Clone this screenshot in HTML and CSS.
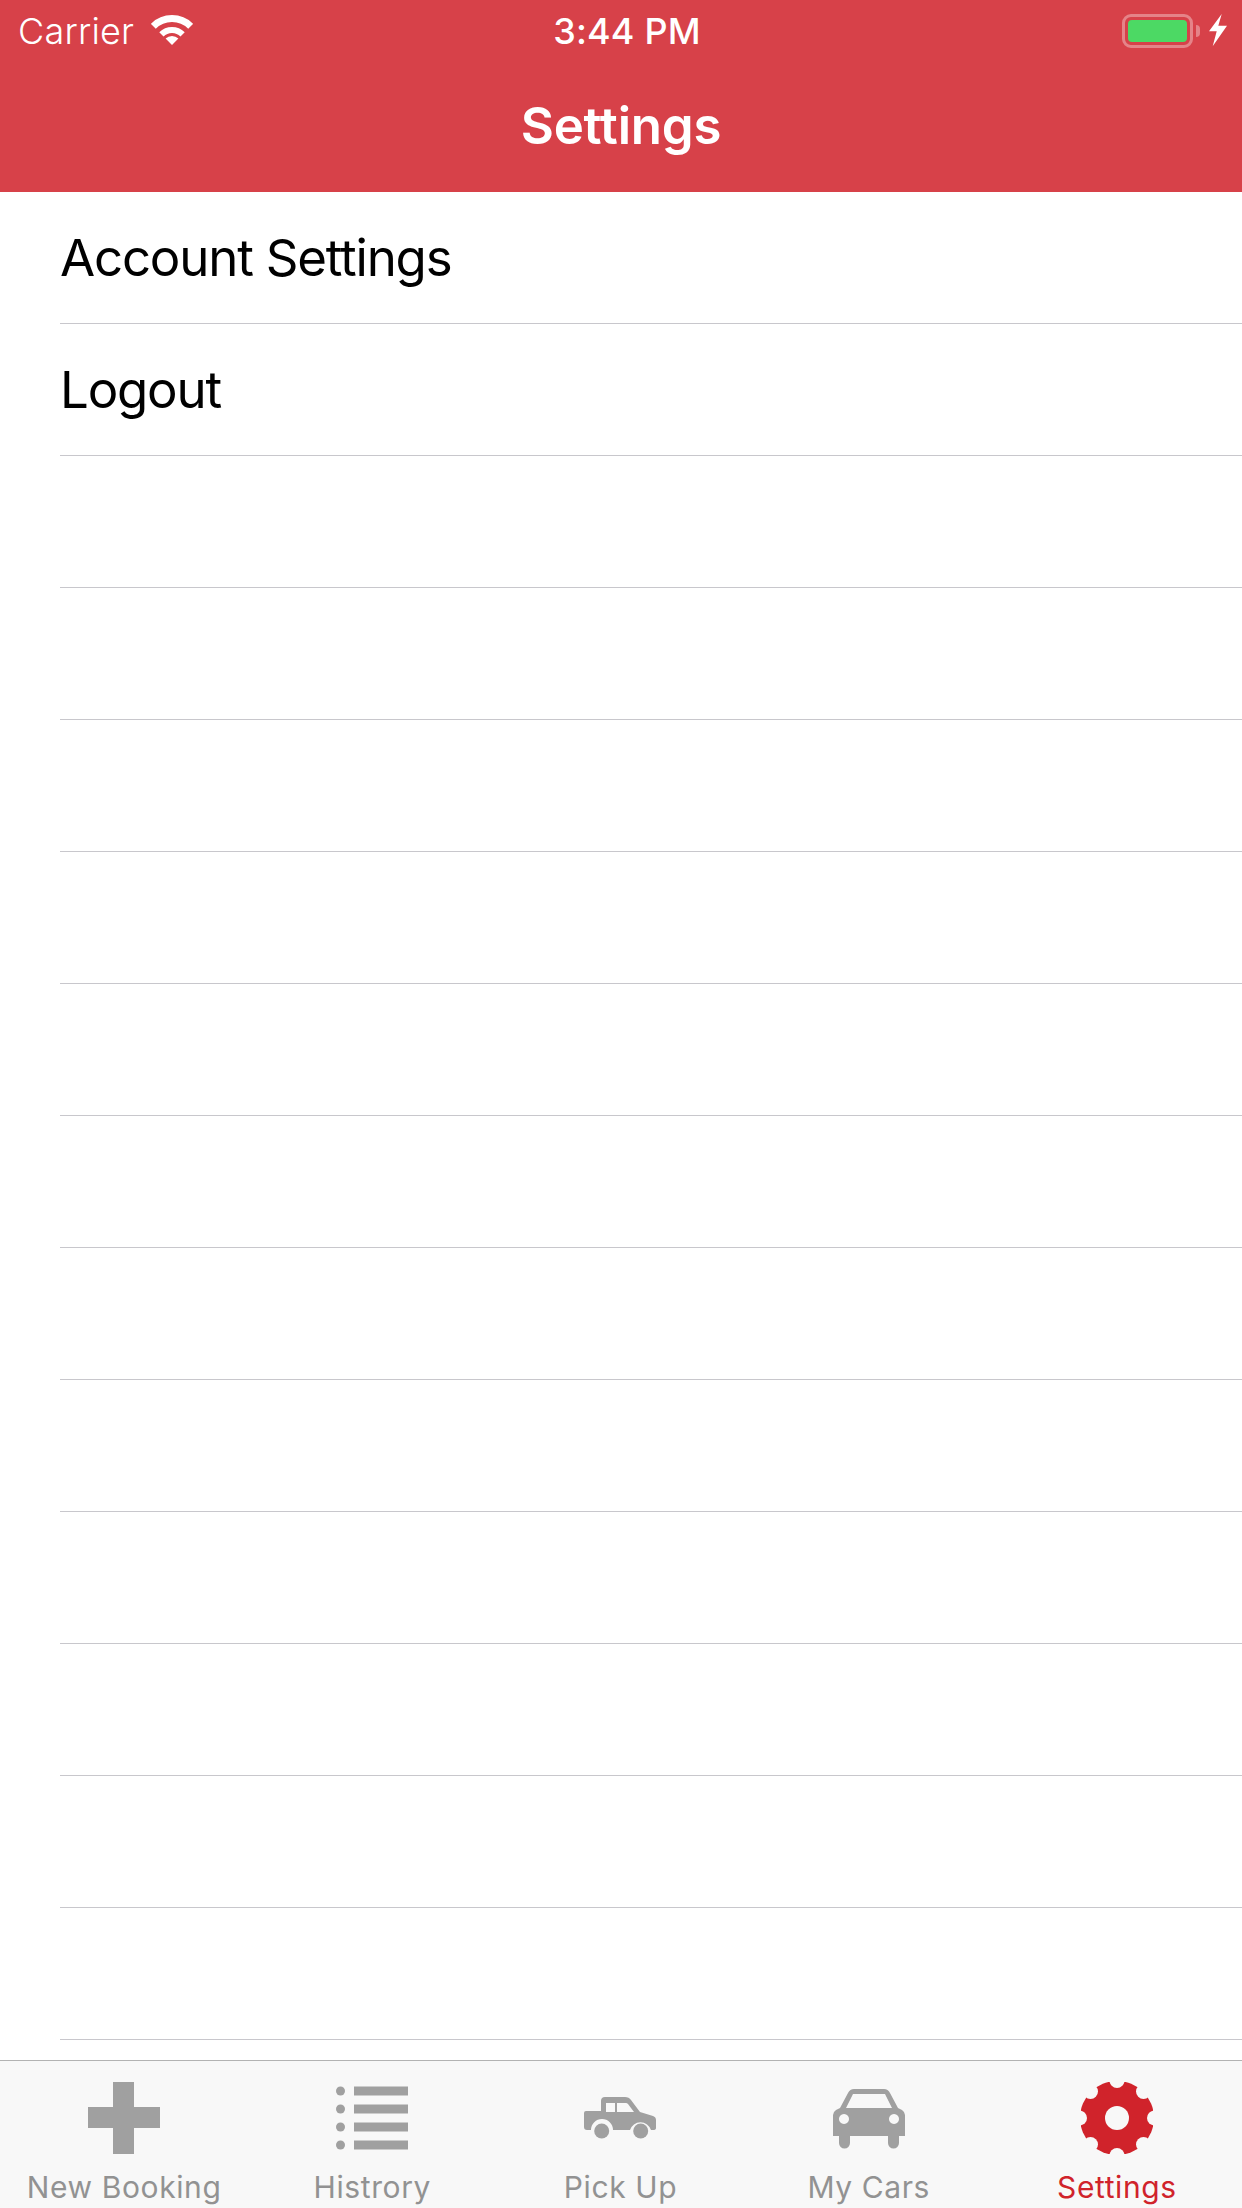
FILE: index.html
```html
<!DOCTYPE html>
<html lang="en">
<head>
  <meta charset="UTF-8">
  <meta name="viewport" content="width=device-width, initial-scale=1.0">
  <title>Settings</title>
  <link rel="stylesheet" href="styles.css">
</head>
<body>
  <div class="app">
    <header class="header">
      <div class="status">
        <div class="status-left">
          <span class="carrier">Carrier</span>
          <svg class="wifi" viewBox="0 0 42 30" fill="none" stroke="#fff">
            <path d="M2.3 11.3a26.5 26.5 0 0 1 37.4 0" stroke-width="7"/>
            <path d="M10.4 19.4a15 15 0 0 1 21.2 0" stroke-width="6"/>
            <path d="M14.6 23.6a9 9 0 0 1 12.8 0L21 30z" fill="#fff" stroke="none"/>
          </svg>
        </div>
        <span class="time">3:44 PM</span>
        <div class="status-right">
          <div class="battery"><div class="battery-level"></div></div>
          <div class="battery-nub"></div>
          <svg class="bolt" viewBox="0 0 18 33"><path d="M12.7 0 0 17.3h7.7L3.7 32.3 18 11.7H9.3z" fill="#fff"/></svg>
        </div>
      </div>
      <h1 class="title">Settings</h1>
    </header>

    <ul class="list">
      <li class="row">Account Settings</li>
      <li class="row">Logout</li>
      <li class="row"></li>
      <li class="row"></li>
      <li class="row"></li>
      <li class="row"></li>
      <li class="row"></li>
      <li class="row"></li>
      <li class="row"></li>
      <li class="row"></li>
      <li class="row"></li>
      <li class="row"></li>
      <li class="row"></li>
      <li class="row"></li>
    </ul>

    <nav class="tabs">
      <div class="tab">
        <svg class="tab-icon" viewBox="0 0 72 72"><path d="M25 0h21v25h26v21H46v26H25V46H0V25h25z"/></svg>
        <span class="tab-label">New Booking</span>
      </div>
      <div class="tab">
        <svg class="tab-icon" viewBox="0 0 72 72">
          <circle cx="4.5" cy="9" r="4.5"/><circle cx="4.5" cy="27" r="4.5"/><circle cx="4.5" cy="45" r="4.5"/><circle cx="4.5" cy="63" r="4.5"/>
          <path d="M18 4.5h54v9H18zM18 22.5h54v9H18zM18 40.5h54v9H18zM18 58.5h54v9H18z"/>
        </svg>
        <span class="tab-label">Histrory</span>
      </div>
      <div class="tab">
        <svg class="tab-icon" viewBox="0 0 72 72">
          <path fill-rule="evenodd" d="M0 31q0-2 2-2h15V19q0-4 4-4h20q4 0 6 3l9 12 13 4q3 1 3 4v8q0 2-3 2h-2a11 11 0 0 0-21 0H29a11 11 0 0 0-22 0H3q-3 0-3-3zM22 21v9h9v-9zM33 21v9h17l-6-8q-1-1-2-1z"/>
          <circle cx="17.7" cy="49" r="7.5"/><circle cx="56.7" cy="49" r="7.5"/>
        </svg>
        <span class="tab-label">Pick Up</span>
      </div>
      <div class="tab">
        <svg class="tab-icon" viewBox="0 0 72 72">
          <path fill-rule="evenodd" d="M21 7h30q4 0 6 4l8 15 4 2q3 2 3 5v21H66v7a5.500 5.500 0 0 1-11 0v-7H17v7a5.500 5.500 0 0 1-11 0v-7H0V33q0-3 3-5l4-2 8-15q2-4 6-4zM20 12 13 26h46l-7-14zM11 32a5 5 0 1 0 .01 0zM61 32a5 5 0 1 0 .01 0z"/>
        </svg>
        <span class="tab-label">My Cars</span>
      </div>
      <div class="tab tab-active">
        <svg class="tab-icon" viewBox="0 0 72 72">
          <mask id="gear-cut">
            <circle cx="36" cy="36" r="37" fill="#fff"/>
            <g fill="#000">
              <circle cx="36" cy="-1.500" r="7.500"/><circle cx="62.500" cy="9.500" r="7.500"/>
              <circle cx="73.500" cy="36" r="7.500"/><circle cx="62.500" cy="62.500" r="7.500"/>
              <circle cx="36" cy="73.500" r="7.500"/><circle cx="9.500" cy="62.500" r="7.500"/>
              <circle cx="-1.500" cy="36" r="7.500"/><circle cx="9.500" cy="9.500" r="7.500"/>
              <circle cx="36" cy="36" r="12"/>
            </g>
          </mask>
          <rect width="72" height="72" mask="url(#gear-cut)"/>
        </svg>
        <span class="tab-label">Settings</span>
      </div>
    </nav>
  </div>
</body>
</html>
```

FILE: styles.css
```css
* {
  box-sizing: border-box;
}

body {
  margin: 0;
  font-family: 'Inter', 'Liberation Sans', sans-serif;
  background-color: #fff;
  color: #000;
}

.app {
  display: flex;
  flex-direction: column;
  width: 1242px;
  height: 2208px;
  overflow: hidden;
}

.header {
  height: 192px;
  background-color: #d74149;
  color: #fff;
}

.status {
  display: grid;
  grid-template-columns: 1fr auto 1fr;
  align-items: center;
  height: 60px;
  padding: 1px 15px 0 18px;
}

.status-left,
.status-right {
  display: flex;
  align-items: center;
}

.status-right {
  justify-content: flex-end;
}

.carrier {
  font-size: 36px;
  font-weight: 300;
  letter-spacing: 0.2px;
}

.wifi {
  width: 42px;
  height: 30px;
  margin-left: 17px;
  margin-top: -2px;
}

.time {
  margin-left: 9px;
  font-size: 36px;
  font-weight: 500;
  letter-spacing: 0.2px;
}

.battery {
  width: 71px;
  height: 34px;
  padding: 3px;
  border: 3px solid rgba(255, 255, 255, 0.35);
  border-radius: 9px;
}

.battery-level {
  height: 100%;
  background-color: #4cd964;
  border-radius: 4px;
}

.battery-nub {
  width: 4px;
  height: 12px;
  margin-left: 3px;
  background-color: rgba(255, 255, 255, 0.35);
  border-radius: 0 6px 6px 0;
}

.bolt {
  width: 18px;
  height: 33px;
  margin-left: 9px;
}

.title {
  margin: 0;
  height: 132px;
  padding-bottom: 1px;
  display: flex;
  align-items: center;
  justify-content: center;
  font-size: 51px;
  font-weight: 600;
  letter-spacing: -0.2px;
}

.list {
  flex: 1;
  margin: 0;
  padding: 0 0 0 60px;
  list-style: none;
}

.row {
  display: flex;
  align-items: center;
  height: 132px;
  border-bottom: 1px solid #c8c7cc;
  font-size: 51px;
  letter-spacing: -1.2px;
}

.tabs {
  display: grid;
  grid-template-columns: repeat(5, 1fr);
  height: 148px;
  padding-right: 1px;
  background-color: #f8f8f8;
  border-top: 1px solid #b2b2b2;
  overflow: hidden;
}

.tab {
  display: flex;
  flex-direction: column;
  align-items: center;
  padding-top: 21px;
  color: #929292;
  fill: #a0a0a0;
}

.tab-active {
  color: #d0232b;
  fill: #d0232b;
}

.tab-icon {
  flex: none;
  width: 72px;
  height: 72px;
}

.tab-label {
  margin-top: 15px;
  font-size: 30px;
  line-height: 36px;
  letter-spacing: 0.6px;
  white-space: nowrap;
}
```
